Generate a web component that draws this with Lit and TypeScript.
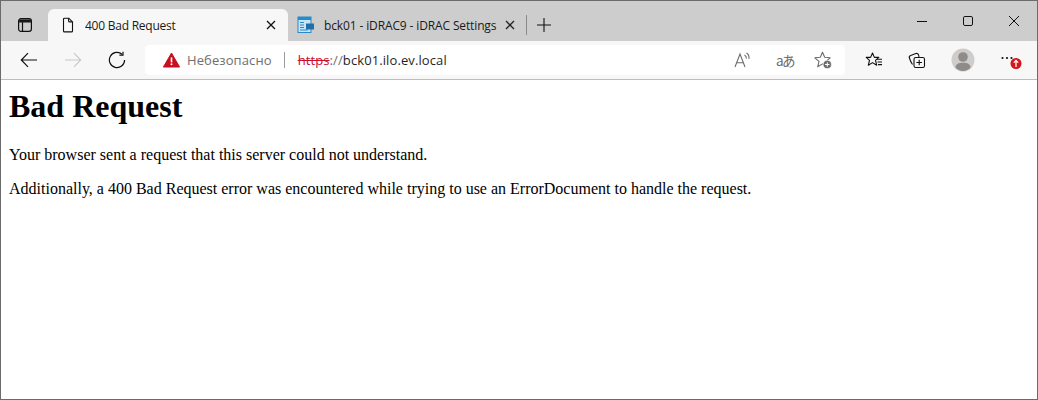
import { LitElement, html, css } from "lit";
import { customElement } from "lit/decorators.js";

@customElement("app-root")
export class AppRoot extends LitElement {
  static styles = css`
    :host { display: block; width: 1038px; height: 400px; overflow: hidden; }
    .win { box-sizing: border-box; width: 1038px; height: 400px; border: 1px solid #6b6b6b; display: flex; flex-direction: column; background: #fff; }
    svg { display: block; flex: none; }
    .strip { height: 40px; background: #cdcdcd; display: flex; align-items: flex-end; flex: none; font: 12px "Open Sans", "Noto Sans", sans-serif; color: #1a1a1a; }
    .side { width: 47px; height: 32px; display: flex; align-items: center; padding-left: 16px; box-sizing: border-box; }
    .tab { box-sizing: border-box; width: 240px; height: 32px; background: #f7f7f7; border-radius: 6px 6px 0 0; display: flex; align-items: center; padding: 0 9px 0 12px; flex: none; }
    .tab2 { background: transparent; width: 238px; padding: 0 8px 0 9px; }
    .title { flex: 1; margin-left: 9px; white-space: nowrap; overflow: hidden; font-size: 12px; letter-spacing: -0.24px; }
    .tab2 .title { margin-left: 9px; letter-spacing: -0.13px; }
    .sep { width: 1px; height: 20px; background: #8a8a8a; margin: 0 0 6px 0; flex: none; }
    .plus { width: 34px; height: 32px; display: flex; align-items: center; justify-content: center; }
    .spacer { flex: 1; }
    .ctl { width: 46px; height: 40px; display: flex; align-items: center; justify-content: center; align-self: flex-start; }
    .bar { height: 39px; box-sizing: border-box; background: #f7f7f7; border-bottom: 1px solid #bdbdbd; flex: none; display: flex; align-items: center; }
    .nav { width: 44px; height: 30px; display: flex; align-items: center; justify-content: center; flex: none; }
    .nav.first { margin-left: 6px; }
    .addr { box-sizing: border-box; margin-left: 6px; width: 700px; height: 30px; background: #fff; border-radius: 4px; display: flex; align-items: center; padding-left: 18px; flex: none; font: 13px "Open Sans", "Noto Sans", sans-serif; }
    .warn { color: #6e6e6e; margin-left: 7px; font-size: 13px; letter-spacing: 0.1px; }
    .vr { width: 1px; height: 16px; background: #9a9a9a; margin: 0 13px 0 12px; }
    .url { color: #1f1f1f; font-size: 13px; letter-spacing: 0.1px; }
    .https { color: #c8102e; text-decoration: line-through; }
    .sl { color: #6e6e6e; }
    .ai { width: 40px; height: 30px; display: flex; align-items: center; justify-content: center; flex: none; }
    .ai.last { margin-right: 2px; }
    .cjk { font: 13.5px "Noto Sans CJK JP", "Noto Sans", sans-serif; color: #6b6b6b; letter-spacing: -1.5px; margin-left: 4px; }
    .tools { display: flex; align-items: center; margin-left: 7px; }
    .ti { width: 44.5px; height: 30px; display: flex; align-items: center; justify-content: center; flex: none; }
    .ti.coll { margin-left: -2px; margin-right: 2px; }
    .page { flex: 1; padding: 8px; color: #000; font-family: "Liberation Serif", serif; font-size: 16px; }
    h1 { font-size: 32px; line-height: 37px; margin: 0 0 21.44px; font-weight: bold; }
    p { margin: 0 0 16px; line-height: 18px; }
  `;

  render() {
    return html`<div class="win">
      <div class="strip">
        <div class="side">
          <svg width="16" height="16" viewBox="0 0 16 16" fill="none" stroke="#111" stroke-width="1.2"><rect x="1.6" y="1.6" width="12.8" height="12.8" rx="2.4"/><path d="M5.5 5v9M2 5h12"/><path d="M2.2 2.5h11.600v2.400H2.200z" fill="#111" stroke="none"/></svg>
        </div>
        <div class="tab">
          <svg width="16" height="16" viewBox="0 0 16 16" fill="none" stroke="#111" stroke-width="1.1"><path d="M3.500 2.200a1 1 0 0 1 1-1h4.300l3.700 3.700v9a1 1 0 0 1-1 1h-7a1 1 0 0 1-1-1z"/><path d="M8.600 1.300v2.600a1 1 0 0 0 1 1h2.800"/></svg>
          <span class="title">400 Bad Request</span>
          <svg width="16" height="16" viewBox="0 0 16 16" stroke="#111" stroke-width="1.3"><path d="M4 4l8 8M12 4l-8 8"/></svg>
        </div>
        <div class="tab tab2">
          <svg width="18" height="18" viewBox="0 0 18 18"><rect x="1" y="1" width="13" height="15.500" fill="#c9e4f5" stroke="#2a8ac8"/><rect x="1" y="1" width="13" height="3" fill="#2a8ac8"/><path d="M3 6.500h4M3 9h4M3 11.500h4M3 14h8" stroke="#2a8ac8"/><rect x="9" y="7.500" width="8" height="6" fill="#1f6fa8"/></svg>
          <span class="title">bck01 - iDRAC9 - iDRAC Settings</span>
          <svg width="16" height="16" viewBox="0 0 16 16" stroke="#222" stroke-width="1.3"><path d="M4 4l8 8M12 4l-8 8"/></svg>
        </div>
        <div class="sep"></div>
        <div class="plus"><svg width="16" height="16" viewBox="0 0 16 16" stroke="#111" stroke-width="1.1"><path d="M8 1v14M1 8h14"/></svg></div>
        <div class="spacer"></div>
        <div class="ctl"><svg width="12" height="12" viewBox="0 0 12 12" stroke="#111" stroke-width="1"><path d="M1 6.500h10"/></svg></div>
        <div class="ctl"><svg width="12" height="12" viewBox="0 0 12 12" fill="none" stroke="#111" stroke-width="1"><rect x="1.500" y="1.500" width="9" height="9" rx="1.400"/></svg></div>
        <div class="ctl"><svg width="12" height="12" viewBox="0 0 12 12" stroke="#111" stroke-width="1"><path d="M1 1l10 10M11 1L1 11"/></svg></div>
      </div>
      <div class="bar">
        <div class="nav first"><svg width="18" height="18" viewBox="0 0 18 18" fill="none" stroke="#111" stroke-width="1.200"><path d="M17 9H1.500M8 2.200L1.300 9 8 15.800"/></svg></div>
        <div class="nav"><svg width="18" height="18" viewBox="0 0 18 18" fill="none" stroke="#c9c9c9" stroke-width="1.200"><path d="M1 9h15.500M10 2.200L16.700 9 10 15.800"/></svg></div>
        <div class="nav"><svg width="18" height="18" viewBox="0 0 18 18" fill="none" stroke="#111" stroke-width="1.200"><path d="M14.200 3.400A7.600 7.600 0 1 0 16.600 9"/><path d="M15 .8v3.400h-3.600"/></svg></div>
        <div class="addr">
          <svg width="17" height="16" viewBox="0 0 17 16"><path d="M8.500 1L16.600 15H.4z" fill="#c80f1e" stroke="#c80f1e" stroke-linejoin="round"/><path d="M8.500 5.400v5" stroke="#fff" stroke-width="1.600"/><circle cx="8.500" cy="12.300" r="1" fill="#fff"/></svg>
          <span class="warn">Небезопасно</span>
          <span class="vr"></span>
          <span class="url"><span class="https">https</span><span class="sl">://</span>bck01.ilo.ev.local</span>
          <span class="spacer"></span>
          <div class="ai"><svg width="18" height="16" viewBox="0 0 18 16" fill="none" stroke="#6b6b6b" stroke-width="1.100"><path d="M1 15L6 2l5 13M2.800 10.800h6.600"/><path d="M10.500 3c1.400.8 2 2 1.800 3.600M12.500 1c2 1.300 2.900 3.200 2.400 5.800"/></svg></div>
          <div class="ai"><span class="cjk">aあ</span></div>
          <div class="ai last"><svg width="18" height="18" viewBox="0 0 18 18"><path d="M8.500 1.200l2.200 5.100 5.500.5-4.200 3.600 1.300 5.400-4.800-2.900-4.800 2.900 1.300-5.400L.8 6.800l5.500-.5z" fill="none" stroke="#6b6b6b" stroke-width="1.100" stroke-linejoin="round"/><circle cx="13.300" cy="13.500" r="4.100" fill="#6b6b6b" stroke="#fff" stroke-width=".6"/><path d="M13.300 11.300v4.400M11.100 13.500h4.400" stroke="#fff" stroke-width="1"/></svg></div>
        </div>
        <div class="tools">
          <div class="ti"><svg width="18" height="18" viewBox="0 0 18 18" fill="none" stroke="#111" stroke-width="1.100" stroke-linejoin="round"><path d="M7.500 2l1.900 4.400h4.400l-3.300 3 1.200 4.800-4.200-2.600-4.200 2.600 1.200-4.800L1.200 6.400h4.400z"/><path d="M12 8.300h5M12.500 11h4.500M13 13.600h4"/></svg></div>
          <div class="ti coll"><svg width="18" height="18" viewBox="0 0 18 18" fill="none" stroke="#111" stroke-width="1.100"><path d="M4.500 13.500C3.200 11.500 2 9 1.400 7c-.4-1.200.2-2.200 1.300-2.600l5.200-1.800c1.100-.4 2.100.1 2.600 1.100L11 6"/><rect x="6" y="6.500" width="10.500" height="10" rx="1.800"/><path d="M11.200 8.700v5.600M8.400 11.500h5.600"/></svg></div>
          <div class="ti"><svg width="24" height="24" viewBox="0 0 24 24"><circle cx="12" cy="12" r="11.500" fill="#cfcdcb"/><circle cx="12" cy="9" r="4.800" fill="#8e8b88"/><path d="M4.500 19.500c0-3.500 3.500-4.800 7.500-4.800s7.500 1.300 7.500 4.800c-1.800 2-4.600 3.500-7.500 3.500s-5.700-1.500-7.500-3.500z" fill="#8e8b88"/></svg></div>
          <div class="ti"><svg width="30" height="24" viewBox="0 0 30 24"><g fill="#111"><circle cx="9.500" cy="10" r="1.100"/><circle cx="14" cy="10" r="1.100"/><circle cx="18.500" cy="10" r="1.100"/></g><circle cx="23" cy="15.500" r="5.500" fill="#d8141c"/><path d="M23 19v-6.300M20.800 14.600l2.200-2.200 2.200 2.200" fill="none" stroke="#fff" stroke-width="1.300"/></svg></div>
        </div>
      </div>
      <div class="page">
        <h1>Bad Request</h1>
        <p>Your browser sent a request that this server could not understand.</p>
        <p>Additionally, a 400 Bad Request error was encountered while trying to use an ErrorDocument to handle the request.</p>
      </div>
    </div>`;
  }
}
